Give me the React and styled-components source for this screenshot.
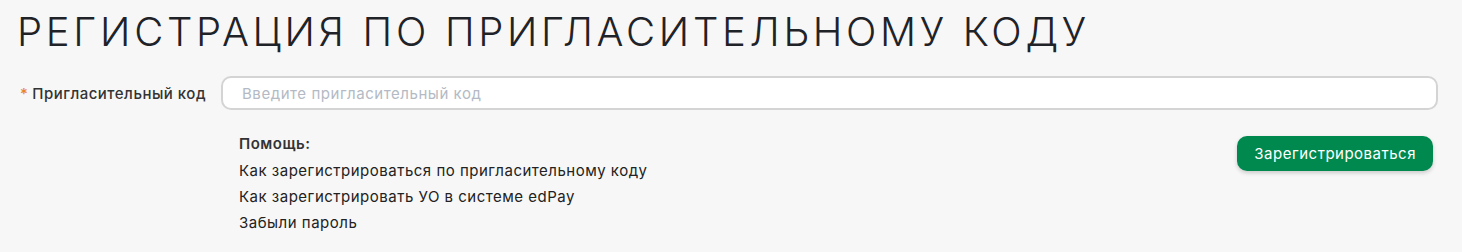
import React from "react";
import styled, { createGlobalStyle } from "styled-components";

const GlobalStyle = createGlobalStyle`
  html, body {
    margin: 0;
    padding: 0;
    background: #f7f7f7;
  }
  body {
    font-family: Inter, "Noto Sans", sans-serif;
    color: #222;
    letter-spacing: 0.5px;
  }
`;

const Page = styled.div`
  padding: 6px 24px 0 17px;
`;

const Title = styled.h1`
  margin: 0 0 18px;
  font-size: 40px;
  font-weight: 300;
  line-height: 52px;
  letter-spacing: 3.7px;
  color: #1f2328;
`;

const FormRow = styled.div`
  display: flex;
  align-items: center;
`;

const Label = styled.label`
  width: 204px;
  padding-left: 3px;
  box-sizing: border-box;
  font-size: 15px;
  font-weight: 500;
  color: #333;
  white-space: nowrap;
`;

const Star = styled.span`
  color: #e8832a;
  margin-right: 4px;
`;

const Input = styled.input`
  flex: 1;
  height: 34px;
  box-sizing: border-box;
  border: 2px solid #d4d4d4;
  border-radius: 10px;
  background: #fff;
  padding: 0 19px;
  font-family: inherit;
  font-size: 15px;
  letter-spacing: 0.55px;
  color: #333;
  outline: none;

  &::placeholder {
    color: #b3bac4;
  }
`;

const Bottom = styled.div`
  display: flex;
  justify-content: space-between;
  align-items: flex-start;
  padding: 24px 5px 0 222px;
`;

const Help = styled.div`
  display: flex;
  flex-direction: column;
  gap: 6px;
  font-size: 15px;
`;

const HelpTitle = styled.div`
  font-weight: 600;
  color: #333;
  line-height: 20px;
  margin-bottom: 1px;
`;

const HelpLink = styled.a`
  color: #222;
  text-decoration: none;
  line-height: 20px;
  cursor: pointer;
`;

const Button = styled.button`
  margin-top: 2px;
  height: 35px;
  padding: 0 17px;
  border: none;
  border-radius: 10px;
  background: #00894f;
  color: #fff;
  font-family: inherit;
  font-size: 15px;
  letter-spacing: 0.5px;
  box-shadow: 0 2px 4px rgba(0, 0, 0, 0.18);
  cursor: pointer;
`;

export default function App() {
  return (
    <Page>
      <GlobalStyle />
      <Title>РЕГИСТРАЦИЯ ПО ПРИГЛАСИТЕЛЬНОМУ КОДУ</Title>
      <FormRow>
        <Label>
          <Star>*</Star>Пригласительный код
        </Label>
        <Input placeholder="Введите пригласительный код" />
      </FormRow>
      <Bottom>
        <Help>
          <HelpTitle>Помощь:</HelpTitle>
          <HelpLink>Как зарегистрироваться по пригласительному коду</HelpLink>
          <HelpLink>Как зарегистрировать УО в системе edPay</HelpLink>
          <HelpLink>Забыли пароль</HelpLink>
        </Help>
        <Button>Зарегистрироваться</Button>
      </Bottom>
    </Page>
  );
}
